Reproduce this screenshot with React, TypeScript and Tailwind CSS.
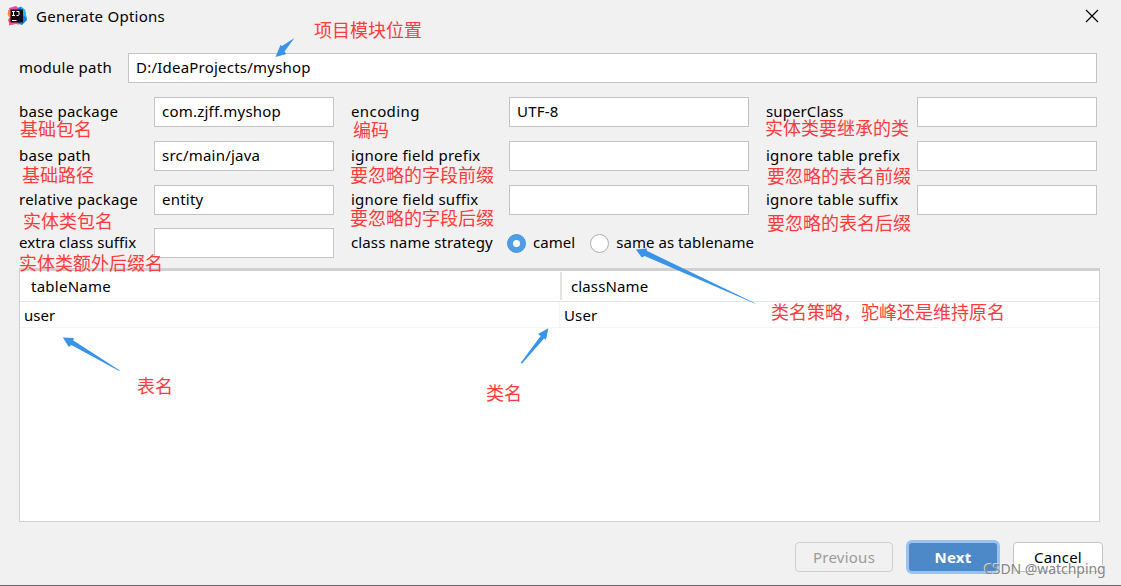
import { useState } from "react";
import clsx from "clsx";

const notes = [
  { text: "项目模块位置", place: "left-[314px] top-[16px]" },
  { text: "基础包名", place: "left-[20px] top-[115px]" },
  { text: "编码", place: "left-[353px] top-[116px]" },
  { text: "实体类要继承的类", place: "left-[765px] top-[114px]" },
  { text: "基础路径", place: "left-[22px] top-[161px]" },
  { text: "要忽略的字段前缀", place: "left-[350px] top-[161px]" },
  { text: "要忽略的表名前缀", place: "left-[767px] top-[162px]" },
  { text: "实体类包名", place: "left-[23px] top-[207px]" },
  { text: "要忽略的字段后缀", place: "left-[350px] top-[204px]" },
  { text: "要忽略的表名后缀", place: "left-[767px] top-[209px]" },
  { text: "实体类额外后缀名", place: "left-[19px] top-[249px]" },
  { text: "类名策略，驼峰还是维持原名", place: "left-[771px] top-[298px]" },
  { text: "表名", place: "left-[137px] top-[372px]" },
  { text: "类名", place: "left-[486px] top-[379px]" },
];

const arrows = [
  "M294 38 L281.5 46 L280 45 L275 57 L286 54 L284 51.5 Z",
  "M756 304 L647 251.3 L647 248.8 L636 250 L642 258 L644.8 256.5 L755 304 Z",
  "M119.5 371.5 L72.5 341 L73 338.6 L62 338 L68 347.5 L70.5 345.5 L118 371.5 Z",
  "M520.5 363.5 L540.6 336.6 L538 334.5 L548.3 328.7 L546 340.3 L544 339 L522 364 Z",
];

const IdeaLogo = () => (
  <svg className="h-5 w-5" viewBox="0 0 20 20">
    <path d="M1 4.5 L8 1 L9 18 L3 19 L1 14 L3 11 Z" fill="#f43d78" />
    <path d="M0.5 8 L2 4 L5 3 L5 10 L2 11 Z" fill="#ff8a32" />
    <path d="M2 2 L9 0 L13 3 L8 7 L3 5 Z" fill="#e74bb0" />
    <path d="M11 2 L14 0.5 L18 4 L20 14 L15 19 L9 17 Z" fill="#0784e8" />
    <path d="M14 1 L18 4 L19.5 12 L16 9 Z" fill="#28b6f0" />
    <path d="M2 16 L9 15 L12 19 L8 17.5 L2 19.5 Z" fill="#ff5187" />
    <rect x="3.5" y="3.5" width="12.5" height="13" fill="#160a10" />
    <path d="M5 5.5h3M6.5 5.5v4M5 9.5h3M9.5 5.5h2.5v3q0 1-1 1h-1.5" fill="none" stroke="#fff" strokeWidth="1" />
    <path d="M5 14.5h4.5" stroke="#fff" />
  </svg>
);

const Field = ({ id, value = "" }: { id: string; value?: string }) => (
  <input
    id={id}
    defaultValue={value}
    className="block h-[30px] w-full min-w-0 border border-[#c4c4c4] bg-white px-[7px] pb-0.5 tracking-[0.22px] outline-none"
  />
);

const Label = ({ id, text, className }: { id: string; text: string; className?: string }) => (
  <label htmlFor={id} className={clsx("h-[30px] whitespace-nowrap leading-[28px]", className)}>
    {text}
  </label>
);

const Radio = ({ label, checked, onSelect }: { label: string; checked: boolean; onSelect: () => void }) => (
  <button type="button" role="radio" aria-checked={checked} onClick={onSelect} className="flex h-[30px] items-center gap-[7px]">
    <span
      className={clsx(
        "flex h-[19px] w-[19px] items-center justify-center rounded-full border",
        checked ? "border-[#4394df] bg-[#4f9ee3]" : "border-[#afafaf] bg-white"
      )}
    >
      {checked && <span className="h-[7px] w-[7px] rounded-full bg-white" />}
    </span>
    <span className="whitespace-nowrap pb-0.5 tracking-[0.05px]">{label}</span>
  </button>
);

const App = () => {
  const [strategy, setStrategy] = useState("camel");

  return (
    <div className="relative flex h-[586px] w-[1121px] flex-col overflow-hidden border-b border-[#6b6b6b] bg-[#f1f1f1] font-['Noto_Sans','Noto_Sans_CJK_SC',sans-serif] text-[15px] text-black">
      <header className="flex h-[53px] items-start justify-between pl-[7px] pr-[22px]">
        <div className="flex h-8 items-center gap-[9px]">
          <IdeaLogo />
          <h1 className="tracking-[0.25px]">Generate Options</h1>
        </div>
        <svg className="mt-[9px] h-[14px] w-[14px]" viewBox="0 0 14 14">
          <path d="M1 1 L13 13 M13 1 L1 13" stroke="#000" strokeWidth="1.2" />
        </svg>
      </header>

      <div className="grid grid-cols-[109px_969px] pl-[19px]">
        <Label id="module" text="module path" className="tracking-[0.25px]" />
        <Field id="module" value="D:/IdeaProjects/myshop" />
      </div>

      <div className="mt-[14px] grid grid-cols-[135px_180px_175px_240px_168px_180px] gap-y-[14px] pl-[19px] tracking-[0.25px]">
        <Label id="package" text="base package" />
        <Field id="package" value="com.zjff.myshop" />
        <Label id="encoding" text="encoding" className="pl-[17px] tracking-[0.4px]" />
        <Field id="encoding" value="UTF-8" />
        <Label id="super" text="superClass" className="pl-[17px] tracking-[0.1px]" />
        <Field id="super" />

        <Label id="path" text="base path" />
        <Field id="path" value="src/main/java" />
        <Label id="fieldPrefix" text="ignore field prefix" className="pl-[17px]" />
        <Field id="fieldPrefix" />
        <Label id="tablePrefix" text="ignore table prefix" className="pl-[17px]" />
        <Field id="tablePrefix" />

        <Label id="relative" text="relative package" />
        <Field id="relative" value="entity" />
        <Label id="fieldSuffix" text="ignore field suffix" className="pl-[17px]" />
        <Field id="fieldSuffix" />
        <Label id="tableSuffix" text="ignore table suffix" className="pl-[17px]" />
        <Field id="tableSuffix" />
      </div>

      <div className="mt-[13px] grid grid-cols-[135px_180px_156px_auto] pl-[19px]">
        <Label id="suffix" text="extra class suffix" className="tracking-[0.06px]" />
        <Field id="suffix" />
        <span className="whitespace-nowrap pl-[17px] leading-[28px] tracking-[0.12px]">class name strategy</span>
        <div role="radiogroup" className="flex gap-[15px] pl-[17px]">
          <Radio label="camel" checked={strategy === "camel"} onSelect={() => setStrategy("camel")} />
          <Radio label="same as tablename" checked={strategy === "same"} onSelect={() => setStrategy("same")} />
        </div>
      </div>

      <div className="ml-[19px] mt-[10px] h-[254px] w-[1081px] border border-t-[3px] border-[#d0d0d0] bg-white">
        <div className="flex h-[31px] border-b border-[#e3e3e3] pt-px">
          <div className="h-7 w-[542px] border-r-2 border-[#e3e3e3] pl-[11px] leading-[29px] tracking-[0.25px]">tableName</div>
          <div className="pl-[9px] leading-[29px] tracking-[0.12px]">className</div>
        </div>
        <div className="flex h-[26px] border-b border-[#f5f5f5] leading-[26px]">
          <div className="w-[540px] border-r border-[#f5f5f5] pl-1">user</div>
          <div className="pl-1 tracking-[0.15px]">User</div>
        </div>
      </div>

      <footer className="mt-[18px] flex items-center pl-[795px]">
        <button className="h-[30px] w-[98px] rounded-[4px] border border-[#cfcfcf] tracking-[0.25px] text-[#9b9b9b]">Previous</button>
        <button className="ml-[13px] h-[34px] w-[94px] rounded-[6px] border-[3px] border-[#97c3f3] bg-[#4d89c9] font-bold tracking-[0.2px] text-white">Next</button>
        <button className="ml-[13px] h-[30px] w-[90px] rounded-[4px] border border-[#c4c4c4] bg-white tracking-[0.2px]">Cancel</button>
      </footer>

      <svg className="pointer-events-none absolute inset-0 h-full w-full" viewBox="0 0 1121 586">
        {arrows.map((d) => (
          <path key={d} d={d} fill="#3993e6" />
        ))}
      </svg>
      {notes.map((note) => (
        <span key={note.text} className={clsx("pointer-events-none absolute whitespace-nowrap font-['Noto_Sans_CJK_SC',sans-serif] text-[18px] leading-[26px] text-[#ff3b3b]", note.place)}>
          {note.text}
        </span>
      ))}
      <span className="pointer-events-none absolute left-[984px] top-[559px] whitespace-nowrap font-['Noto_Sans',sans-serif] text-[14px] leading-5 tracking-[-0.05px] text-[#858585] [text-shadow:-1px_-1px_0_#ffffffb0]">
        CSDN @watchping
      </span>
    </div>
  );
};

export default App;
